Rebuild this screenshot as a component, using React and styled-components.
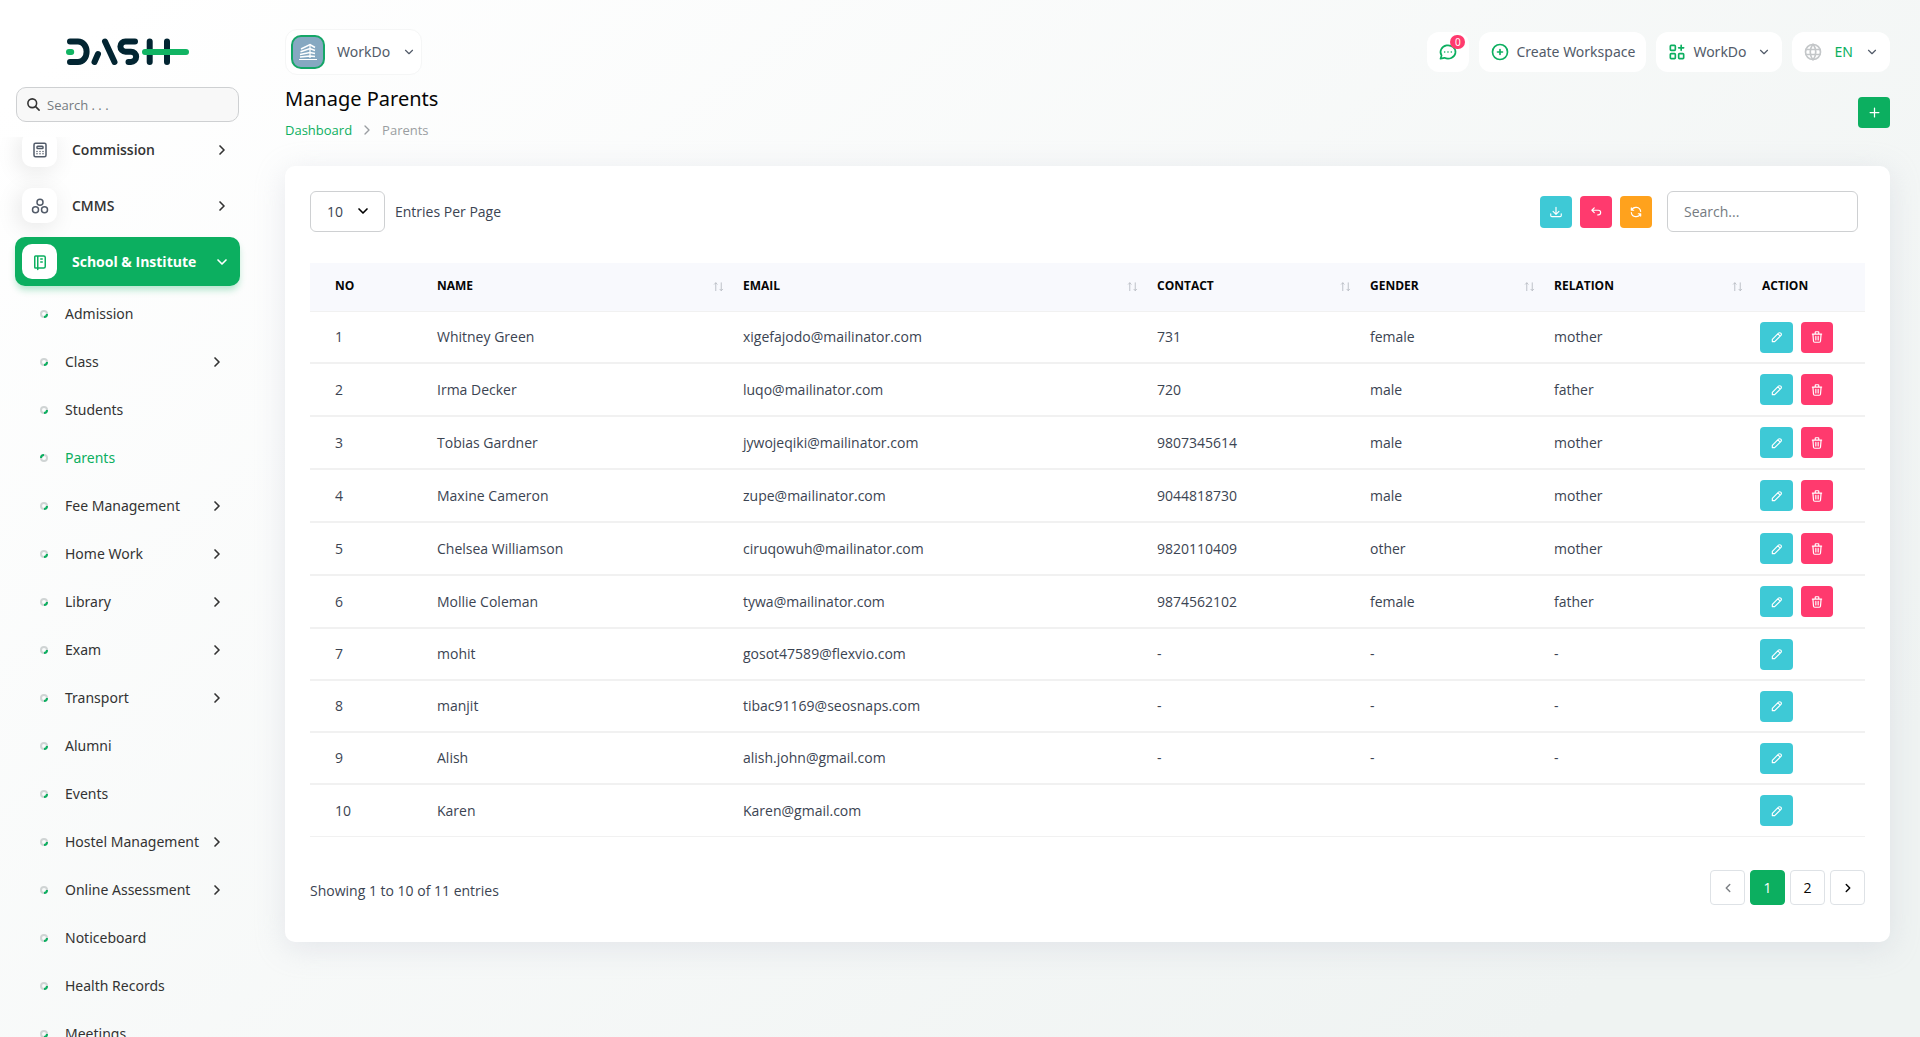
import React from "react";
import styled, { createGlobalStyle, css } from "styled-components";

const GREEN = "#0CAF60";
const CYAN = "#3EC9D6";
const PINK = "#FF3A6E";
const ORANGE = "#FFA21D";

const NAV_ITEMS = [
  { label: "Commission", icon: "calculator" },
  { label: "CMMS", icon: "circles" },
  { label: "School & Institute", icon: "notebook", active: true },
];

const SUB_ITEMS = [
  { label: "Admission" },
  { label: "Class", nested: true },
  { label: "Students" },
  { label: "Parents", active: true },
  { label: "Fee Management", nested: true },
  { label: "Home Work", nested: true },
  { label: "Library", nested: true },
  { label: "Exam", nested: true },
  { label: "Transport", nested: true },
  { label: "Alumni" },
  { label: "Events" },
  { label: "Hostel Management", nested: true },
  { label: "Online Assessment", nested: true },
  { label: "Noticeboard" },
  { label: "Health Records" },
  { label: "Meetings" },
];

const COLUMNS = [
  { label: "No", width: 115 },
  { label: "Name", width: 306, sortable: true },
  { label: "Email", width: 414, sortable: true },
  { label: "Contact", width: 213, sortable: true },
  { label: "Gender", width: 184, sortable: true },
  { label: "Relation", width: 208, sortable: true },
  { label: "Action", width: 115 },
];

const PARENTS = [
  ["Whitney Green", "xigefajodo@mailinator.com", "731", "female", "mother"],
  ["Irma Decker", "luqo@mailinator.com", "720", "male", "father"],
  ["Tobias Gardner", "jywojeqiki@mailinator.com", "9807345614", "male", "mother"],
  ["Maxine Cameron", "zupe@mailinator.com", "9044818730", "male", "mother"],
  ["Chelsea Williamson", "ciruqowuh@mailinator.com", "9820110409", "other", "mother"],
  ["Mollie Coleman", "tywa@mailinator.com", "9874562102", "female", "father"],
  ["mohit", "gosot47589@flexvio.com", "-", "-", "-"],
  ["manjit", "tibac91169@seosnaps.com", "-", "-", "-"],
  ["Alish", "alish.john@gmail.com", "-", "-", "-"],
  ["Karen", "Karen@gmail.com", "", "", ""],
];

const DELETABLE_COUNT = 6;

const ICONS = {
  calculator: (
    <>
      <rect x="4" y="3" width="16" height="18" rx="2" />
      <rect x="8" y="7" width="8" height="3" rx="1" />
      <path d="M8 14v.01M12 14v.01M16 14v.01M8 17v.01M12 17v.01M16 17v.01" />
    </>
  ),
  circles: (
    <>
      <circle cx="12" cy="7" r="4" />
      <circle cx="6" cy="17" r="4" />
      <circle cx="18" cy="17" r="4" />
    </>
  ),
  notebook: (
    <path d="M6 4h11a2 2 0 0 1 2 2v12a2 2 0 0 1-2 2H6a1 1 0 0 1-1-1V5a1 1 0 0 1 1-1M9 4v18M13 8h2M13 12h2" />
  ),
  search: (
    <>
      <circle cx="10" cy="10" r="7" />
      <path d="M21 21l-6-6" />
    </>
  ),
  message: (
    <path d="M3 20l1.3-3.9a9 8 0 1 1 3.4 2.9L3 20M12 12v.01M8 12v.01M16 12v.01" />
  ),
  circlePlus: (
    <>
      <circle cx="12" cy="12" r="9" />
      <path d="M9 12h6M12 9v6" />
    </>
  ),
  apps: (
    <>
      <rect x="4" y="4" width="6" height="6" rx="1" />
      <rect x="4" y="14" width="6" height="6" rx="1" />
      <rect x="14" y="14" width="6" height="6" rx="1" />
      <path d="M14 7h6M17 4v6" />
    </>
  ),
  world: (
    <>
      <circle cx="12" cy="12" r="9" />
      <path d="M3.6 9h16.8M3.6 15h16.8M11.5 3a17 17 0 0 0 0 18M12.5 3a17 17 0 0 1 0 18" />
    </>
  ),
  chevronDown: <path d="M6 9l6 6 6-6" />,
  chevronRight: <path d="M9 6l6 6-6 6" />,
  chevronLeft: <path d="M15 6l-6 6 6 6" />,
  plus: <path d="M12 5v14M5 12h14" />,
  download: (
    <path d="M3 15v3a2 2 0 0 0 2 2h14a2 2 0 0 0 2-2v-3M7 11l5 5 5-5M12 4v12" />
  ),
  back: <path d="M9 13L5 9l4-4M5 9h11a4 4 0 0 1 0 8h-1" />,
  refresh: (
    <path d="M20 11A8.1 8.1 0 0 0 4.5 9M4 5v4h4M4 13a8.1 8.1 0 0 0 15.5 2M20 19v-4h-4" />
  ),
  pencil: (
    <path d="M4 20h4L18.5 9.5a1.5 1.5 0 0 0-4-4L4 16v4M13.5 6.5l4 4" />
  ),
  trash: (
    <path d="M4 7h16M10 11v6M14 11v6M5 7l1 12a2 2 0 0 0 2 2h8a2 2 0 0 0 2-2l1-12M9 7V4a1 1 0 0 1 1-1h4a1 1 0 0 1 1 1v3" />
  ),
  sort: <path d="M6 21V4M3 7l3-3 3 3M18 4v17M15 18l3 3 3-3" />,
};

const Icon = ({ name, size = 14, stroke = 2, color = "currentColor" }) => (
  <Svg
    width={size}
    height={size}
    viewBox="0 0 24 24"
    fill="none"
    stroke={color}
    strokeWidth={stroke}
    strokeLinecap="round"
    strokeLinejoin="round"
    aria-hidden="true"
  >
    {ICONS[name]}
  </Svg>
);

const Logo = () => (
  <Svg width="140" height="45" viewBox="0 0 140 45" fill="none" strokeWidth="6" strokeLinecap="round" aria-hidden="true">
    <g stroke="#022532" strokeLinejoin="round">
      <path d="M10 11.5h8c5 0 8.6 4.5 8.6 10.2S23 32 18 32h-8" />
      <path d="M38 24l-3.5 8M45 11.5L54.5 32" />
      <path d="M75 11.5H65.5a5.1 5.1 0 0 0 0 10.2H71a5.15 5.15 0 0 1 0 10.3h-2.5" />
      <path d="M89.7 11.5V32M107 11.5V32" />
    </g>
    <path d="M9 22h2.2M85 22h41" stroke="#11B463" />
  </Svg>
);

const Building = () => (
  <Svg width="20" height="18" viewBox="0 0 20 18" fill="none" stroke="#fff" aria-hidden="true">
    <path d="M3 6l9-4.500 5 3M2.500 8.700l9.500-3.200 5 2M2 11.400l10-2 5 1.100M2 14l10-1 5 .5" strokeWidth="1.500" />
    <path d="M12 1.500V15" strokeWidth="1.200" />
    <path d="M1 16.500h18" strokeWidth="1" />
  </Svg>
);

const Bullet = ({ active }) => (
  <Svg width="8" height="8" viewBox="0 0 8 8" fill="none" strokeWidth="2" aria-hidden="true">
    <circle cx="4" cy="4" r="3" stroke="#CFD4D4" />
    <path d={active ? "M1 4a3 3 0 0 1 3-3" : "M7 4a3 3 0 0 1-3 3"} stroke={GREEN} />
  </Svg>
);

const Sidebar = () => (
  <Aside>
    <LogoLink href="#" aria-label="Dash">
      <Logo />
    </LogoLink>
    <MenuSearch>
      <Icon name="search" size={15} stroke={2.5} color="#333" />
      <MenuSearchInput type="text" placeholder="Search . . ." aria-label="Search menu" />
    </MenuSearch>
    <NavScroll>
      <NavList>
        {NAV_ITEMS.map(({ label, icon, active }) => (
          <li key={label}>
            <NavLink href="#" $active={active}>
              <IconTile $active={active}>
                <Icon name={icon} size={18} />
              </IconTile>
              <NavLabel>{label}</NavLabel>
              <Icon name={active ? "chevronDown" : "chevronRight"} size={16} stroke={2.5} />
            </NavLink>
          </li>
        ))}
      </NavList>
      <SubList>
        {SUB_ITEMS.map(({ label, nested, active }) => (
          <li key={label}>
            <SubLink href="#" $active={active}>
              <Bullet active={active} />
              <SubLabel>{label}</SubLabel>
              {nested && <Icon name="chevronRight" size={16} stroke={2.5} />}
            </SubLink>
          </li>
        ))}
      </SubList>
    </NavScroll>
  </Aside>
);

const Header = () => (
  <HeaderBar>
    <WorkspaceButton type="button">
      <Avatar>
        <Building />
      </Avatar>
      WorkDo
      <Icon name="chevronDown" />
    </WorkspaceButton>
    <HeaderActions>
      <Pill type="button" aria-label="Messages">
        <Icon name="message" size={20} color={GREEN} />
        <Badge>0</Badge>
      </Pill>
      <Pill type="button">
        <Icon name="circlePlus" size={20} color={GREEN} />
        Create Workspace
      </Pill>
      <Pill type="button">
        <Icon name="apps" size={20} color={GREEN} />
        WorkDo
        <ChevronSlot>
          <Icon name="chevronDown" />
        </ChevronSlot>
      </Pill>
      <Pill type="button">
        <Icon name="world" size={20} color="#C4C7C9" />
        <Language>EN</Language>
        <Icon name="chevronDown" />
      </Pill>
    </HeaderActions>
  </HeaderBar>
);

const ParentsTable = () => (
  <Table>
    <colgroup>
      {COLUMNS.map(({ label, width }) => (
        <Col key={label} $width={width} />
      ))}
    </colgroup>
    <thead>
      <tr>
        {COLUMNS.map(({ label, sortable }) => (
          <Th key={label} scope="col">
            <ThInner>
              {label}
              {sortable && <Icon name="sort" size={11} color="#B9BDC4" />}
            </ThInner>
          </Th>
        ))}
      </tr>
    </thead>
    <tbody>
      {PARENTS.map((cells, index) => {
        const deletable = index < DELETABLE_COUNT;
        return (
          <Row key={cells[0]} $tall={deletable}>
            <Td>{index + 1}</Td>
            {cells.map((cell, i) => (
              <Td key={i}>{cell}</Td>
            ))}
            <Td>
              <RowActions>
                <IconButton type="button" $color={CYAN} $wide aria-label="Edit">
                  <Icon name="pencil" />
                </IconButton>
                {deletable && (
                  <IconButton type="button" $color={PINK} aria-label="Delete">
                    <Icon name="trash" />
                  </IconButton>
                )}
              </RowActions>
            </Td>
          </Row>
        );
      })}
    </tbody>
  </Table>
);

const App = () => (
  <Layout>
    <GlobalStyle />
    <Sidebar />
    <Main>
      <Header />
      <PageHead>
        <div>
          <Title>Manage Parents</Title>
          <Breadcrumb aria-label="Breadcrumb">
            <a href="#">Dashboard</a>
            <Icon name="chevronRight" size={16} />
            <span>Parents</span>
          </Breadcrumb>
        </div>
        <IconButton type="button" $color={GREEN} aria-label="Create">
          <Icon name="plus" size={15} />
        </IconButton>
      </PageHead>
      <Card>
        <Toolbar>
          <EntriesLabel>
            <SelectWrap>
              <Select defaultValue="10">
                <option>10</option>
                <option>25</option>
                <option>50</option>
              </Select>
              <Icon name="chevronDown" size={16} stroke={2.5} color="#000" />
            </SelectWrap>
            Entries Per Page
          </EntriesLabel>
          <Tools>
            <IconButton type="button" $color={CYAN} $tall aria-label="Export">
              <Icon name="download" />
            </IconButton>
            <IconButton type="button" $color={PINK} $tall aria-label="Reset">
              <Icon name="back" />
            </IconButton>
            <IconButton type="button" $color={ORANGE} $tall aria-label="Reload">
              <Icon name="refresh" />
            </IconButton>
            <TableSearch type="search" placeholder="Search..." aria-label="Search parents" />
          </Tools>
        </Toolbar>
        <ParentsTable />
        <CardFooter>
          <Summary>Showing 1 to 10 of 11 entries</Summary>
          <Pagination aria-label="Pagination">
            <PageButton type="button" disabled aria-label="Previous page">
              <Icon name="chevronLeft" stroke={2.5} />
            </PageButton>
            <PageButton type="button" $active>
              1
            </PageButton>
            <PageButton type="button">2</PageButton>
            <PageButton type="button" aria-label="Next page">
              <Icon name="chevronRight" stroke={2.5} />
            </PageButton>
          </Pagination>
        </CardFooter>
      </Card>
    </Main>
  </Layout>
);

const GlobalStyle = createGlobalStyle`
  * {
    box-sizing: border-box;
  }

  body {
    margin: 0;
    color: #3b4452;
    font-family: "Open Sans", sans-serif;
    font-size: 14px;
    line-height: 20px;
    background: #fff;
  }

  button,
  input,
  select {
    font: inherit;
    color: inherit;
  }

  a {
    color: inherit;
    text-decoration: none;
  }
`;

const notoSans = css`
  font-family: "Noto Sans", sans-serif;
  font-weight: 400;
`;

const Svg = styled.svg`
  display: block;
  flex: none;
`;

const Layout = styled.div`
  display: flex;
  height: 100vh;
  overflow: hidden;
  background: linear-gradient(141deg, #fff 4%, #eff3f2 88%);
`;

const Aside = styled.aside`
  flex: none;
  display: flex;
  flex-direction: column;
  width: 255px;
  padding: 30px 15px 0;
`;

const LogoLink = styled.a`
  display: block;
  padding: 0 45px;
`;

const MenuSearch = styled.label`
  flex: none;
  display: flex;
  align-items: center;
  gap: 6px;
  height: 35px;
  margin: 12px 1px 15px;
  padding: 0 9px;
  border: 1px solid #ced0d2;
  border-radius: 10px;
  background: #f8f8f8;
`;

const MenuSearchInput = styled.input`
  flex: 1;
  min-width: 0;
  padding: 0;
  border: 0;
  outline: 0;
  background: none;
  font-size: 13px;

  &::placeholder {
    color: #757b81;
  }
`;

const NavScroll = styled.nav`
  flex: 1;
  min-height: 0;
  overflow: hidden;
  margin: 0 -15px;
  padding: 0 15px;
`;

/* scrolled slightly past the top of its first item */
const NavList = styled.ul`
  display: grid;
  gap: 7px;
  margin: -12px 0 4px;
  padding: 0;
  list-style: none;
`;

const NavLink = styled.a`
  display: flex;
  align-items: center;
  gap: 15px;
  height: 49px;
  padding: 7px 10px 7px 7px;
  border-radius: 10px;
  color: #333;
  font-weight: 600;

  ${({ $active }) =>
    $active &&
    css`
      color: #fff;
      font-weight: 700;
      background: ${GREEN};
      box-shadow: 0 5px 7px -1px rgba(12, 175, 96, 0.3);
    `}
`;

const NavLabel = styled.span`
  flex: 1;
  white-space: nowrap;
`;

const SubLabel = styled(NavLabel)`
  padding-left: 9px;
`;

const IconTile = styled.span`
  flex: none;
  display: grid;
  place-items: center;
  width: 35px;
  height: 35px;
  border-radius: 10px;
  color: ${({ $active }) => ($active ? GREEN : "#525b69")};
  background: #fff;
  box-shadow: ${({ $active }) => ($active ? "none" : "-3px 4px 23px rgba(0, 0, 0, 0.1)")};
`;

const SubList = styled.ul`
  margin: 0;
  padding: 0;
  list-style: none;
`;

const SubLink = styled.a`
  ${notoSans}
  display: flex;
  align-items: center;
  gap: 8px;
  height: 48px;
  padding: 0 15px 0 25px;
  color: ${({ $active }) => ($active ? GREEN : "#333")};
`;

const Main = styled.main`
  flex: 1;
  min-width: 0;
  padding: 29px 30px 0;
`;

const HeaderBar = styled.header`
  display: flex;
  justify-content: space-between;
  align-items: center;
  height: 46px;
`;

const HeaderActions = styled.div`
  display: flex;
  gap: 10px;
`;

const WorkspaceButton = styled.button`
  && {
    ${notoSans}
  }
  display: flex;
  align-items: center;
  gap: 12px;
  height: 46px;
  padding: 0 5px;
  border: 1px solid #f5f6f6;
  border-radius: 12px;
  color: #525b69;
  background: #fff;
`;

const Avatar = styled.span`
  display: grid;
  place-items: center;
  width: 34px;
  height: 34px;
  border: 2px solid #15a667;
  border-radius: 10px;
  background: #86a8c1;
`;

const Pill = styled.button`
  && {
    ${notoSans}
  }
  position: relative;
  display: flex;
  align-items: center;
  gap: 6px;
  height: 40px;
  padding: 0 11px;
  border: 0;
  border-radius: 12px;
  color: #525b69;
  background: #fff;
`;

const ChevronSlot = styled.span`
  padding-left: 4px;
`;

const Language = styled.span`
  padding: 0 6px;
  color: ${GREEN};
`;

const Badge = styled.span`
  position: absolute;
  top: 3px;
  right: 4px;
  width: 15px;
  height: 14px;
  border-radius: 7px;
  color: #fff;
  font-size: 10px;
  line-height: 14px;
  text-align: center;
  background: ${PINK};
`;

const PageHead = styled.div`
  display: flex;
  justify-content: space-between;
  align-items: center;
  margin: 9px 0 26px;
`;

const Title = styled.h1`
  ${notoSans}
  margin: 0 0 6px;
  color: #060606;
  font-size: 20px;
  line-height: 30px;
`;

const Breadcrumb = styled.nav`
  display: flex;
  align-items: center;
  gap: 7px;
  color: #9a9da1;
  font-size: 13px;

  a {
    color: ${GREEN};
  }
`;

const Card = styled.section`
  padding: 25px 25px 37px;
  border-radius: 10px;
  background: #fff;
  box-shadow: 0 6px 30px rgba(182, 186, 203, 0.3);
`;

const Toolbar = styled.div`
  display: flex;
  justify-content: space-between;
  align-items: center;
  margin-bottom: 31px;
  padding-right: 7px;
`;

const EntriesLabel = styled.label`
  display: flex;
  align-items: center;
  gap: 10px;
`;

const SelectWrap = styled.span`
  position: relative;

  svg {
    position: absolute;
    top: 12px;
    right: 14px;
    pointer-events: none;
  }
`;

const Select = styled.select`
  display: block;
  width: 75px;
  height: 41px;
  padding: 0 16px;
  border: 1px solid #ced0d2;
  border-radius: 6px;
  appearance: none;
  background: #fff;
`;

const Tools = styled.div`
  display: flex;
  align-items: center;
  gap: 8px;
`;

const IconButton = styled.button`
  display: grid;
  place-items: center;
  width: ${({ $wide }) => ($wide ? 33 : 32)}px;
  height: ${({ $tall }) => ($tall ? 32 : 31)}px;
  padding: 0;
  border: 0;
  border-radius: 4px;
  color: #fff;
  background: ${({ $color }) => $color};
`;

const TableSearch = styled.input`
  width: 191px;
  height: 41px;
  margin-left: 7px;
  padding: 0 16px;
  border: 1px solid #ced0d2;
  border-radius: 6px;
  appearance: none;
  background: #fff;

  &::placeholder {
    color: #757b81;
  }
`;

const Table = styled.table`
  width: 100%;
  table-layout: fixed;
  border-collapse: separate;
  border-spacing: 0;
`;

const Col = styled.col`
  width: ${({ $width }) => $width}px;
`;

const Th = styled.th`
  height: 49px;
  padding: 0 7px 2px 12px;
  border-bottom: 1px solid #f1f1f1;
  color: #060606;
  font-size: 12px;
  font-weight: 700;
  text-align: left;
  text-transform: uppercase;
  background: #f8f9fd;

  &:first-child {
    padding-left: 25px;
  }
`;

const ThInner = styled.div`
  display: flex;
  justify-content: space-between;
  align-items: center;
`;

const Td = styled.td`
  padding: 0 12px;
  border-bottom: 2px solid #f1f1f1;

  &:first-child {
    padding-left: 25px;
  }

  &:last-child {
    padding: 0 10px;
  }
`;

const Row = styled.tr`
  height: ${({ $tall }) => ($tall ? 53 : 52)}px;

  &:first-child {
    height: 52px;
  }

  &:last-child ${Td} {
    border-bottom-width: 1px;
  }
`;

const RowActions = styled.div`
  display: flex;
  gap: 8px;
`;

const CardFooter = styled.footer`
  display: flex;
  justify-content: space-between;
  align-items: center;
  margin-top: 33px;
`;

const Summary = styled.span`
  padding-top: 6px;
`;

const Pagination = styled.nav`
  display: flex;
  gap: 5px;
`;

const PageButton = styled.button`
  display: grid;
  place-items: center;
  width: 35px;
  height: 35px;
  padding: 0;
  border: 1px solid ${({ $active }) => ($active ? GREEN : "#dee2e6")};
  border-radius: 4px;
  color: ${({ $active }) => ($active ? "#fff" : "#060606")};
  background: ${({ $active }) => ($active ? GREEN : "#fff")};

  &:disabled {
    color: #7d8085;
  }
`;

export default App;
